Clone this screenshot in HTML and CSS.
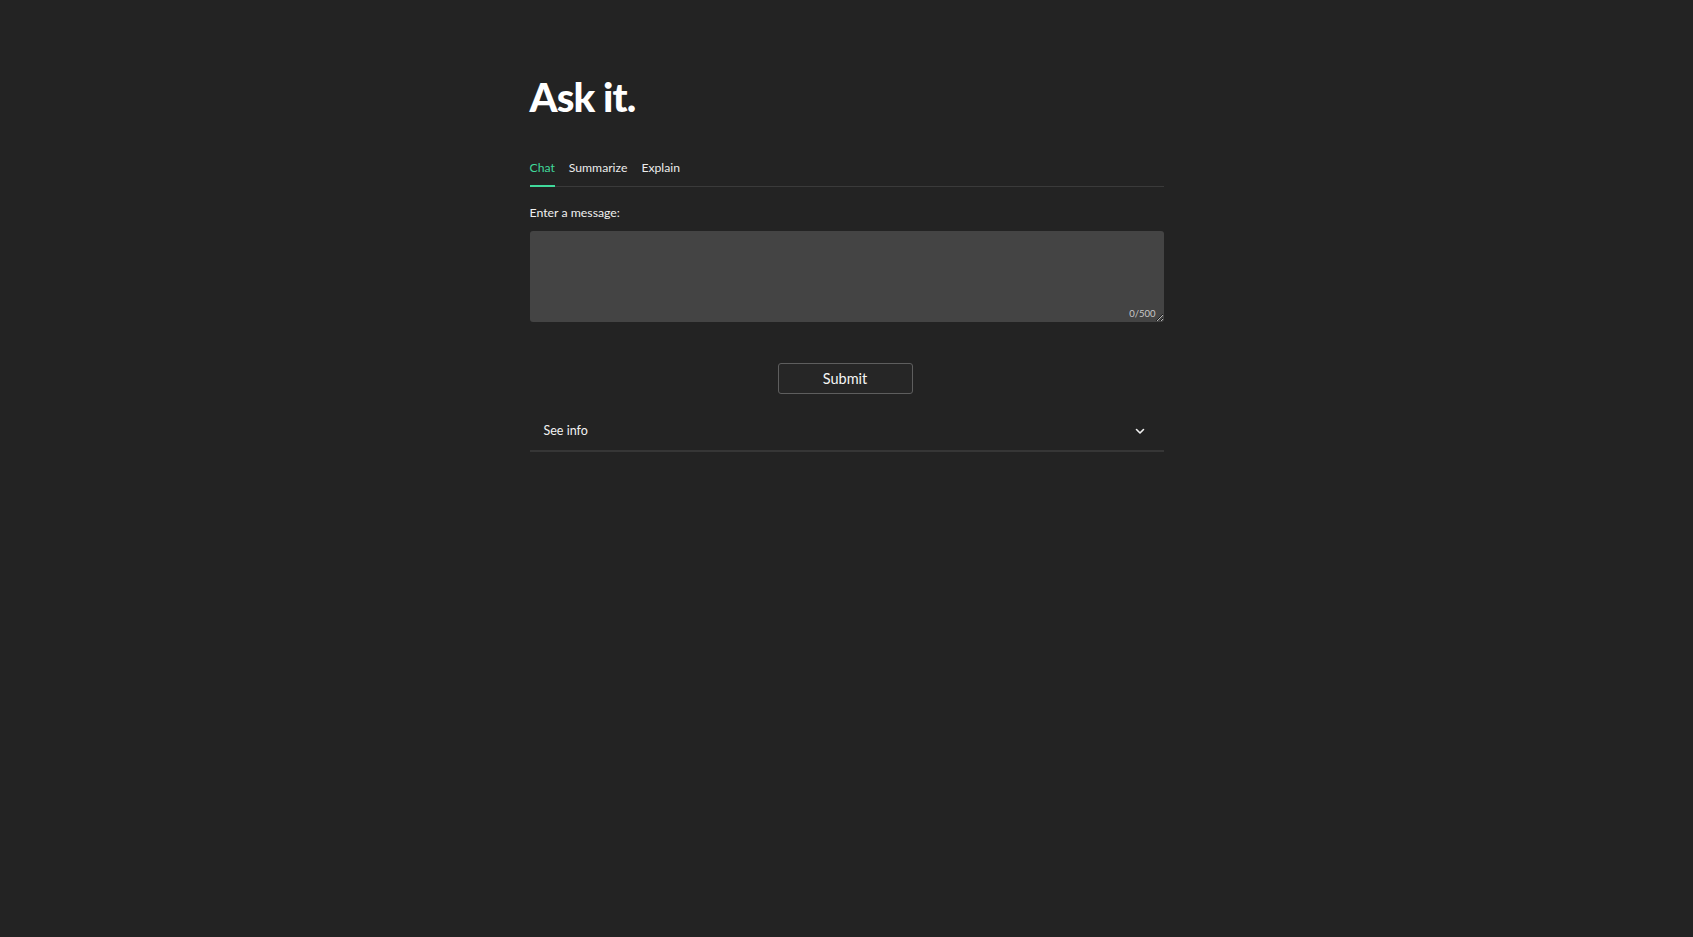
FILE: index.html
```html
<!DOCTYPE html>
<html lang="en">
<head>
<meta charset="utf-8">
<title>Ask it.</title>
<link rel="stylesheet" href="styles.css">
</head>
<body>
<main class="app">
  <h1 class="title">Ask it.</h1>
  <nav class="tabs">
    <button class="tab tab-active">Chat</button>
    <button class="tab">Summarize</button>
    <button class="tab">Explain</button>
  </nav>
  <label class="label" for="msg">Enter a message:</label>
  <div class="field">
    <textarea id="msg" class="input" maxlength="500"></textarea>
    <span class="count">0/500</span>
  </div>
  <div class="actions">
    <button class="submit">Submit</button>
  </div>
  <details class="info">
    <summary class="info-summary">
      <span>See info</span>
      <svg class="chev" width="12" height="12" viewBox="0 0 12 12" aria-hidden="true"><path d="M2.5 4.5 L6 8 L9.5 4.5" fill="none" stroke="#f0f0f0" stroke-width="1.6" stroke-linecap="round" stroke-linejoin="round"/></svg>
    </summary>
  </details>
</main>
</body>
</html>
```
FILE: styles.css
```css
html, body {
  margin: 0;
  padding: 0;
  background: #232323;
  color: #f2f2f2;
  font-family: Lato, "Open Sans", sans-serif;
}

.app {
  width: 634px;
  margin: 0 auto;
  display: flex;
  flex-direction: column;
}

.title {
  margin: 73px 0 0;
  font-size: 40px;
  line-height: 1.2;
  font-weight: 900;
  color: #ffffff;
  letter-spacing: -0.9px;
}

.tabs {
  margin-top: 36px;
  display: flex;
  gap: 14px;
  border-bottom: 1px solid #3a3a3a;
}

.tab {
  background: none;
  border: none;
  padding: 1px 0 7px;
  margin-bottom: -1px;
  font-family: inherit;
  font-size: 12.2px;
  line-height: 20px;
  color: #ececec;
  border-bottom: 2px solid transparent;
  cursor: pointer;
}

.tab-active {
  color: #40d99b;
  border-bottom-color: #40d99b;
}

.label {
  margin-top: 16px;
  font-size: 12.3px;
  line-height: 20px;
  color: #f0f0f0;
}

.field {
  position: relative;
  margin-top: 8px;
  display: flex;
}

.input {
  flex: 1;
  height: 91px;
  box-sizing: border-box;
  background: #444444;
  border: none;
  border-radius: 3px;
  resize: vertical;
  color: #f0f0f0;
  font-family: inherit;
  font-size: 14px;
  padding: 8px 10px;
  outline: none;
  color-scheme: dark;
}

.count {
  position: absolute;
  right: 8px;
  bottom: 3px;
  font-size: 9.5px;
  color: #c8c8c8;
}

.actions {
  margin-top: 41px;
  display: flex;
  justify-content: center;
}

.submit {
  width: 135px;
  height: 31px;
  background: #262626;
  border: 1px solid #5e5e5e;
  border-radius: 3px;
  color: #f4f4f4;
  font-family: inherit;
  font-size: 14.5px;
  cursor: pointer;
  margin-right: 3px;
}

.info {
  margin-top: 17px;
  border-bottom: 2px solid #363636;
}

.info-summary {
  list-style: none;
  display: flex;
  align-items: center;
  justify-content: space-between;
  height: 39px;
  padding: 0 18px 0 14px;
  font-size: 12.5px;
  color: #f2f2f2;
  cursor: pointer;
}

.info-summary::-webkit-details-marker {
  display: none;
}

.chev {
  display: block;
}
```
